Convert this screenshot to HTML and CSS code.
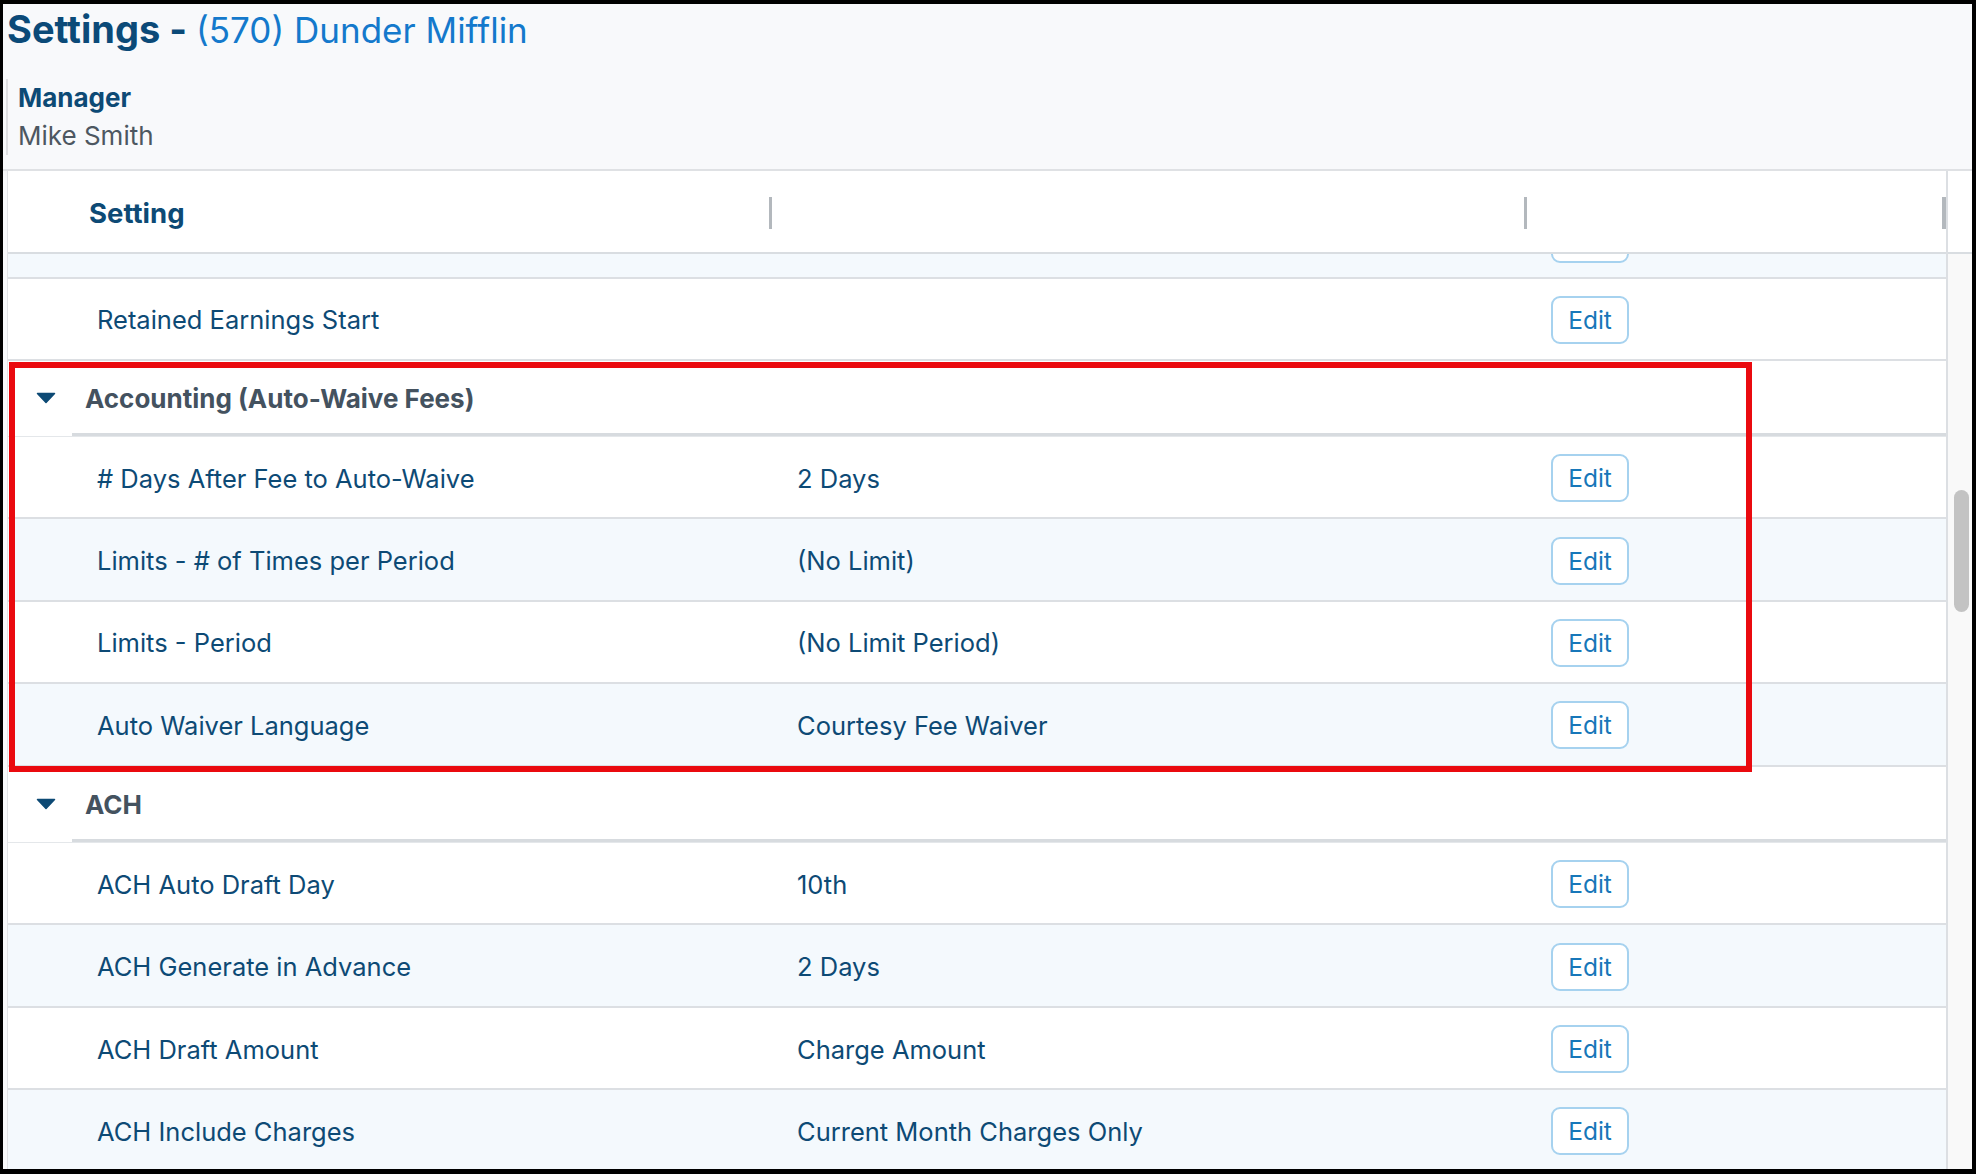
FILE: index.html
```html
<!DOCTYPE html>
<html>
	<head>
		<meta charset="UTF-8">
		<title>Settings - (570) Dunder Mifflin</title>
		<link rel="stylesheet" href="styles.css">
	</head>
	<body>
		<div class="window">
			<header class="page-head">
				<h1 class="page-title">Settings - <span class="store">(570) Dunder Mifflin</span></h1>
				<div class="manager">
					<div class="manager-label">Manager</div>
					<div class="manager-name">Mike Smith</div>
				</div>
			</header>

			<div class="grid-wrap">
				<div class="grid-main">
					<div class="grid-head">
						<div class="head-cell">Setting</div>
						<div class="head-cell"></div>
						<div class="head-cell"></div>
					</div>

					<div class="grid-body">
						<!-- row cut off under the sticky header -->
						<div class="row alt cut">
							<div class="cell"></div>
							<div class="cell"></div>
							<div class="cell"><button class="btn-edit">Edit</button></div>
						</div>
						<div class="row first">
							<div class="cell">Retained Earnings Start</div>
							<div class="cell"></div>
							<div class="cell"><button class="btn-edit">Edit</button></div>
						</div>

						<div class="group">
							<svg class="caret" width="20" height="12" viewBox="0 0 20 12"><path d="M1.5 1.5 H18.5 L10 10.5 Z" fill="#0d4a75" stroke="#0d4a75" stroke-width="1.5" stroke-linejoin="round"/></svg>
							<span class="group-name">Accounting (Auto-Waive Fees)</span>
						</div>
						<div class="row">
							<div class="cell"># Days After Fee to Auto-Waive</div>
							<div class="cell">2 Days</div>
							<div class="cell"><button class="btn-edit">Edit</button></div>
						</div>
						<div class="row alt">
							<div class="cell">Limits - # of Times per Period</div>
							<div class="cell">(No Limit)</div>
							<div class="cell"><button class="btn-edit">Edit</button></div>
						</div>
						<div class="row">
							<div class="cell">Limits - Period</div>
							<div class="cell">(No Limit Period)</div>
							<div class="cell"><button class="btn-edit">Edit</button></div>
						</div>
						<div class="row alt">
							<div class="cell">Auto Waiver Language</div>
							<div class="cell">Courtesy Fee Waiver</div>
							<div class="cell"><button class="btn-edit">Edit</button></div>
						</div>

						<div class="group">
							<svg class="caret" width="20" height="12" viewBox="0 0 20 12"><path d="M1.5 1.5 H18.5 L10 10.5 Z" fill="#0d4a75" stroke="#0d4a75" stroke-width="1.5" stroke-linejoin="round"/></svg>
							<span class="group-name">ACH</span>
						</div>
						<div class="row">
							<div class="cell">ACH Auto Draft Day</div>
							<div class="cell">10th</div>
							<div class="cell"><button class="btn-edit">Edit</button></div>
						</div>
						<div class="row alt">
							<div class="cell">ACH Generate in Advance</div>
							<div class="cell">2 Days</div>
							<div class="cell"><button class="btn-edit">Edit</button></div>
						</div>
						<div class="row">
							<div class="cell">ACH Draft Amount</div>
							<div class="cell">Charge Amount</div>
							<div class="cell"><button class="btn-edit">Edit</button></div>
						</div>
						<div class="row alt">
							<div class="cell">ACH Include Charges</div>
							<div class="cell">Current Month Charges Only</div>
							<div class="cell"><button class="btn-edit">Edit</button></div>
						</div>
					</div>
				</div>

				<div class="grid-side">
					<div class="side-head"></div>
					<div class="track">
						<div class="thumb"></div>
					</div>
				</div>
			</div>

			<!-- annotation drawn over the screenshot -->
			<div class="highlight"></div>
		</div>
	</body>
</html>
```

FILE: styles.css
```css
body{
	margin: 0;
	padding: 0;
	background: #000000;
	font-family: Inter, "Noto Sans", sans-serif;
}
.window{
	position: relative;
	margin: 4px 4px 0 3px;
	height: 1165px;
	overflow: hidden;
	background: #f8f9fb;
	display: flex;
	flex-direction: column;
}

/* page header */
.page-head{
	padding-bottom: 14px;
	border-bottom: 2px solid #dfe1e4;
	box-shadow: 0 2px 8px rgba(0,0,0,0.04);
}
.page-title{
	margin: 3px 0 0 4px;
	font-size: 38px;
	line-height: 44px;
	font-weight: 700;
	color: #0b4a78;
}
.page-title .store{
	color: #1479cc;
	font-weight: 400;
	font-size: 35px;
}
.manager{
	margin: 27px 0 0 3px;
	padding-left: 10px;
	border-left: 2px solid #dedfe2;
	font-size: 26px;
	line-height: 38px;
}
.manager-label{
	font-weight: 700;
	color: #0d4a75;
}
.manager-name{
	color: #4d5761;
}

/* settings grid */
.grid-wrap{
	flex: 1;
	min-height: 0;
	display: flex;
	margin-left: 4px;
	border-left: 1px solid #e1e3e6;
	background: #ffffff;
}
.grid-main{
	width: 1938px;
	border-right: 2px solid #dcdfe3;
	overflow: hidden;
}
.grid-head,
.row{
	display: grid;
	grid-template-columns: 764px 755px 1fr;
}
.grid-head{
	height: 81px;
	border-bottom: 2px solid #d9dde1;
}
.head-cell{
	display: flex;
	align-items: center;
	padding-top: 2px;
	font-size: 27.5px;
	font-weight: 700;
	color: #0d4a75;
}
.head-cell:first-child{
	padding-left: 81px;
}
.head-cell::after{
	content: '';
	margin-left: auto;
	width: 3px;
	height: 32px;
	background: #b3b8bd;
}
.head-cell:last-child::after{
	width: 4px;
}

.row{
	box-sizing: border-box;
	height: 82.4px;
	border-bottom: 2px solid #dcdfe3;
	background: #ffffff;
}
.row.alt{
	background: #f4f9fd;
}
.row.cut{
	height: 25px;
	overflow: hidden;
}
.row.cut .cell{
	align-items: flex-start;
}
.row.cut .btn-edit{
	margin-top: -41px;
}
.row.first{
	height: 81.5px;
}
.cell{
	display: flex;
	align-items: center;
	padding-top: 2px;
	font-size: 25.5px;
	color: #0d4a75;
	padding-left: 25px;
}
.cell:first-child{
	padding-left: 89px;
}
.cell:last-child{
	padding-left: 24px;
}
.btn-edit{
	width: 78px;
	height: 48px;
	box-sizing: border-box;
	border: 2px solid #a6d2ef;
	border-radius: 9px;
	background: #ffffff;
	color: #1777b9;
	font-family: Inter, "Noto Sans", sans-serif;
	font-size: 24.5px;
	padding: 0;
	text-align: center;
}

.group{
	box-sizing: border-box;
	height: 76.5px;
	display: flex;
	align-items: center;
	padding-left: 28px;
	border-bottom: 1px solid #e4e7ea;
	background: linear-gradient(#d7dbdf, #d7dbdf) no-repeat right bottom / calc(100% - 64px) 3px, #ffffff;
}
.caret{
	display: block;
	margin-right: 29px;
}
.group-name{
	font-size: 26px;
	font-weight: 700;
	color: #44525f;
}

/* fake scrollbar column */
.grid-side{
	flex: 1;
	display: flex;
	flex-direction: column;
}
.side-head{
	height: 81px;
	border-bottom: 2px solid #d9dde1;
	background: #ffffff;
}
.track{
	flex: 1;
	background: #f9f9f9;
	padding-top: 236px;
}
.thumb{
	margin-left: 6px;
	width: 15px;
	height: 122px;
	border-radius: 8px;
	background: #c3c3c3;
}

/* red box annotation */
.highlight{
	position: absolute;
	left: 6px;
	top: 358px;
	width: 1743px;
	height: 410px;
	box-sizing: border-box;
	border: 6px solid #ea0a0f;
	pointer-events: none;
}
```
